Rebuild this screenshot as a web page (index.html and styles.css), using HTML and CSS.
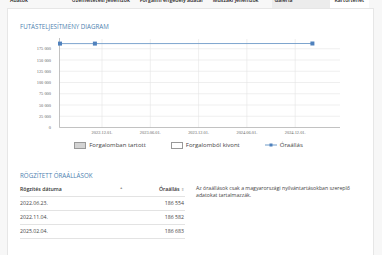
FILE: index.html
```
<!DOCTYPE html>
<html lang="hu">

<head>
    <meta charset="UTF-8">
    <meta name="viewport" content="width=device-width, initial-scale=1.0">
    <title>Futásteljesítmény</title>
    <link rel="stylesheet" href="styles.css">
</head>

<body>
    <div class="tabs">
        <div class="tab tab-first">Adatok</div>
        <div class="tab">Üzemeltetési jellemzők</div>
        <div class="tab">Forgalmi engedély adatai</div>
        <div class="tab">Műszaki jellemzők</div>
        <div class="tab tab-grey">Galéria</div>
        <div class="tab tab-active">Kártörténet</div>
    </div>

    <div class="card">
        <h2 class="section-title">Futásteljesítmény diagram</h2>

        <svg class="chart" width="330" height="100" viewBox="0 0 330 100">
            <g class="grid">
                <line x1="39.5" y1="12.75" x2="320" y2="12.75" />
                <line x1="39.5" y1="24" x2="320" y2="24" />
                <line x1="39.5" y1="35.25" x2="320" y2="35.25" />
                <line x1="39.5" y1="46.5" x2="320" y2="46.5" />
                <line x1="39.5" y1="57.75" x2="320" y2="57.75" />
                <line x1="39.5" y1="69" x2="320" y2="69" />
                <line x1="39.5" y1="80.25" x2="320" y2="80.25" />
                <line x1="82" y1="3" x2="82" y2="91.5" />
                <line x1="130.3" y1="3" x2="130.3" y2="91.5" />
                <line x1="178.6" y1="3" x2="178.6" y2="91.5" />
                <line x1="226.9" y1="3" x2="226.9" y2="91.5" />
                <line x1="275.2" y1="3" x2="275.2" y2="91.5" />
            </g>
            <g class="axis">
                <line x1="39.5" y1="2" x2="39.5" y2="91.5" />
                <line x1="39.5" y1="91.5" x2="320" y2="91.5" />
            </g>
            <g class="ylab">
                <text x="31" y="14.4">175 000</text>
                <text x="31" y="25.6">150 000</text>
                <text x="31" y="36.9">125 000</text>
                <text x="31" y="48.1">100 000</text>
                <text x="31" y="59.4">75 000</text>
                <text x="31" y="70.6">50 000</text>
                <text x="31" y="81.9">25 000</text>
                <text x="31" y="93.1">0</text>
            </g>
            <g class="xlab">
                <text x="82" y="97.5">2022.12.01.</text>
                <text x="130.3" y="97.5">2023.06.01.</text>
                <text x="178.6" y="97.5">2023.12.01.</text>
                <text x="226.9" y="97.5">2024.06.01.</text>
                <text x="275.2" y="97.5">2024.12.01.</text>
            </g>
            <polyline class="series" points="39.6,7.6 74.9,7.6 292.4,7.5" />
            <g class="marker">
                <rect x="38" y="5.6" width="4" height="4" />
                <rect x="72.9" y="5.6" width="4" height="4" />
                <rect x="290.4" y="5.5" width="4" height="4" />
            </g>
        </svg>

        <div class="legend">
            <div class="legend-item"><span class="swatch swatch-grey"></span>Forgalomban tartott</div>
            <div class="legend-item"><span class="swatch"></span>Forgalomból kivont</div>
            <div class="legend-item">
                <svg class="line-icon" width="12" height="6" viewBox="0 0 12 6">
                    <line x1="0" y1="3" x2="12" y2="3" />
                    <rect x="4.5" y="1.5" width="3" height="3" />
                </svg>Óraállás
            </div>
        </div>

        <h2 class="section-title section-title-second">Rögzített óraállások</h2>

        <div class="readings">
            <table class="readings-table">
                <thead>
                    <tr>
                        <th class="col-date">Rögzítés dátuma <span class="sort">▲</span></th>
                        <th class="col-value">Óraállás <span class="sort-both">⇕</span></th>
                    </tr>
                </thead>
                <tbody>
                    <tr>
                        <td>2022.06.23.</td>
                        <td class="col-value">186 554</td>
                    </tr>
                    <tr>
                        <td>2022.11.04.</td>
                        <td class="col-value">186 582</td>
                    </tr>
                    <tr>
                        <td>2025.02.04.</td>
                        <td class="col-value">186 683</td>
                    </tr>
                </tbody>
            </table>
            <p class="note">Az óraállások csak a magyarországi nyilvántartásokban szereplő adatokat tartalmazzák.</p>
        </div>
    </div>
</body>

</html>
```

FILE: styles.css
```
* {
    margin: 0;
    padding: 0;
    box-sizing: border-box;
}

body {
    background-color: #f7f7f7;
    font-family: "Open Sans", "Liberation Sans", sans-serif;
    color: #333;
    overflow: hidden;
}

/* felső fülsor, a képernyő tetején levágva */
.tabs {
    display: flex;
    height: 15px;
    margin-top: -7px;
    padding-left: 5px;
}

.tab {
    padding: 0 5px;
    font-size: 5.2px;
    font-weight: 600;
    line-height: 15px;
    color: #222;
    white-space: nowrap;
}

.tab-first {
    margin-right: 34px;
}

.tab-grey {
    width: 58px;
    margin-left: 8px;
    padding-left: 3px;
    background-color: #ececec;
}

.tab-active {
    background-color: #fff;
}

.card {
    margin: 0 8px 0 7px;
    padding: 14px 12px 30px;
    background-color: #fff;
    border: 1px solid #e6e6e6;
}

.section-title {
    font-size: 6.2px;
    font-weight: 400;
    line-height: 8px;
    text-transform: uppercase;
    color: #4d7fb0;
}

.section-title-second {
    margin-top: 23px;
}

.chart {
    display: block;
    margin-top: 5px;
}

.grid line {
    stroke: #e4e4e4;
    stroke-width: 0.6;
}

.axis line {
    stroke: #a8a8a8;
    stroke-width: 0.7;
}

.ylab text,
.xlab text {
    font-family: "Liberation Serif", serif;
    font-size: 4.4px;
    fill: #666;
}

.ylab text {
    text-anchor: end;
}

.xlab text {
    text-anchor: middle;
}

.series {
    fill: none;
    stroke: #6f9bc8;
    stroke-width: 0.9;
}

.marker rect,
.line-icon rect {
    fill: #4f81bd;
}

.line-icon line {
    stroke: #6f9bc8;
    stroke-width: 1;
}

/* jelmagyarázat */
.legend {
    display: flex;
    justify-content: center;
    gap: 25px;
    margin-top: 5px;
    padding-right: 4px;
    font-size: 6px;
    line-height: 8px;
    color: #444;
}

.legend-item {
    display: flex;
    align-items: center;
    gap: 3px;
}

.swatch {
    display: inline-block;
    width: 12px;
    height: 7px;
    background-color: #fff;
    border: 1px solid #999;
}

.swatch-grey {
    background-color: #d3d3d3;
}

.line-icon {
    display: block;
}

/* rögzített óraállások */
.readings {
    display: flex;
    align-items: flex-start;
    gap: 11px;
    margin-top: 2px;
}

.readings-table {
    width: 165px;
    border-collapse: collapse;
    font-size: 5.2px;
}

.readings-table th,
.readings-table td {
    height: 14px;
    padding: 0 1px 0 0;
    text-align: left;
    border-bottom: 1px solid #e3e3e3;
}

.readings-table th {
    font-weight: 600;
    color: #333;
}

.readings-table td {
    color: #444;
}

.readings-table .col-value {
    text-align: right;
}

.col-date {
    width: 104px;
}

.sort {
    float: right;
    font-size: 3.5px;
    color: #999;
}

.sort-both {
    font-size: 4px;
    color: #bbb;
}

.note {
    flex: 1;
    margin-top: 3px;
    font-size: 5.2px;
    line-height: 7.4px;
    color: #444;
}
```
